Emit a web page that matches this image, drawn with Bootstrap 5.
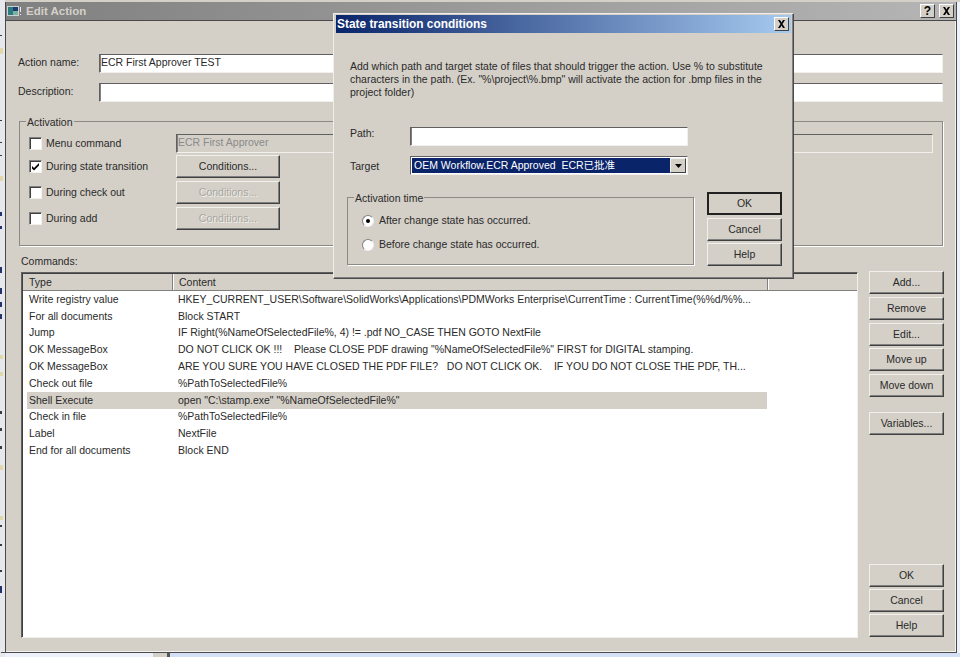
<!DOCTYPE html>
<html lang="en"><head><meta charset="utf-8"><title>Edit Action</title>
<link href="https://cdn.jsdelivr.net/npm/bootstrap@5.3.0/dist/css/bootstrap.min.css" rel="stylesheet">
<style>
html,body{height:100%;}
body{margin:0;background:#edf1fb;font-family:"Liberation Sans",Arial,"Noto Sans CJK SC",sans-serif;font-size:10.5px;line-height:13px;color:#2a2a2a;overflow:hidden;}
.desk{position:relative;width:960px;height:657px;overflow:hidden;}
.topstrip{height:2px;background:#d4d0c8;}
.edge-marks{position:absolute;left:0;top:0;}
.foot-strip{position:absolute;left:153px;top:653px;width:14px;height:4px;background:#d4d0c8;border-right:3px solid #555;box-sizing:content-box;}
.foot-blue{position:absolute;left:170px;top:653px;right:0;height:4px;background:#d3e0f5;}
.win{position:absolute;background:#d4d0c8;border:1px solid #4a4a4a;}
.win-main{left:5px;top:2px;width:952px;height:651px;border-top:0;box-shadow:inset -1px -1px 0 #f4f2ee;}
.win-front{left:333px;top:13px;width:461px;height:266px;border-top-color:#f0eeea;border-left-color:#f0eeea;box-shadow:inset -1px -1px 0 #808080;}
.tbar{display:flex;align-items:center;justify-content:space-between;font-weight:700;font-size:11.5px;}
.tbar-grey{height:19px;padding:0 2px 0 1px;background:linear-gradient(90deg,#808080,#b5b5b5);color:#d4d0c8;border-bottom:1px solid #4a4a4a;}
.tbar-blue{height:18px;margin:1px 2px 0;padding:0 2px 0 1px;background:linear-gradient(90deg,#0a246a,#a6caf0);color:#fff;font-size:11.9px;}
.tbtn{display:flex;align-items:center;justify-content:center;width:15px;height:14px;background:#d4d0c8;border:1px solid;border-color:#fff #404040 #404040 #fff;color:#000;font-size:12px;line-height:12px;font-weight:700;padding:0;}
.wbtn{display:block;padding:0;background:#d4d0c8;color:#2a2a2a;font-size:10.5px;line-height:13px;text-align:center;border:1px solid;border-color:#f2f0ec #404040 #404040 #f2f0ec;box-shadow:inset -1px -1px 0 #808080;border-radius:0;}
.wbtn[disabled]{color:#a8a69f;text-shadow:1px 1px 0 #f2f0ec;opacity:1;}
.wbtn-def{border:2px solid #222;box-shadow:none;}
.field{background:#fff;border:1px solid;border-color:#606060 #f2f0ec #f2f0ec #606060;box-shadow:inset 1px 0 0 #808080;padding:0 1px;font-size:10.5px;line-height:15px;color:#2a2a2a;height:19px;}
.field-off{background:#d4d0c8;color:#8a8a8a;}
.group{position:relative;border:1px solid #8c8a85;box-shadow:1px 1px 0 #fff;}
.legend{position:absolute;top:-6px;left:6px;background:#d4d0c8;padding:0 1px;}
.chk{width:13px;height:13px;background:#fff;border:1px solid;border-color:#808080 #f2f0ec #f2f0ec #808080;box-shadow:inset 1px 1px 0 #404040;flex:none;display:flex;}
.rad{width:12px;height:12px;border-radius:50%;background:#fff;border:1px solid;border-color:#808080 #f2f0ec #f2f0ec #808080;flex:none;display:flex;align-items:center;justify-content:center;}
.rad i{display:block;width:4px;height:4px;border-radius:50%;background:#000;}
/* main window */
.main-body{padding:33px 13px 0 12px;}
.frm-row{display:flex;align-items:center;height:19px;margin-bottom:10px;}
.frm-lbl{width:81px;flex:none;margin-bottom:2px;}
.act-group{height:125px;margin:19px 0 0 1px;padding:10px 9px 0 9px;}
.act-row{display:flex;align-items:center;gap:4px;height:22px;margin-bottom:4px;}
.act-row.act-first{margin-bottom:1px;}
.act-row .lbl{width:126px;flex:none;}
.act-row .wbtn{width:104px;height:23px;}
.cmd-title{margin:9px 0 4px 3px;}
.lst{width:837px;height:366px;margin-left:3px;flex:none;background:#fff;border:1px solid;border-color:#606060 #f2f0ec #f2f0ec #606060;box-shadow:inset 1px 1px 0 #404040;padding:1px 0 0 1px;}
.lst-head{display:flex;height:17px;background:#d4d0c8;border-bottom:1px solid #808080;}
.lst-head div{padding:2px 0 0 6px;border-right:1px solid #808080;box-shadow:1px 0 0 #fff;}
.cola{width:150px;flex:none;}.colb{width:595px;flex:none;}.colc{flex:1;border-right:0!important;box-shadow:none!important;}
.lst-rows{padding:0 0 0 4px;}
.lst-row{display:flex;height:16.8px;align-items:center;width:740px;}
.lst-row .ta{width:151px;flex:none;padding-left:2px;}
.lst-row .tb{white-space:nowrap;overflow:hidden;}
.lst-row.sel{background:#d4d0c8;}
.side{width:75px;margin:-1px 0 0 11px;display:flex;flex-direction:column;height:368px;flex:none;}
.side .wbtn{height:23px;width:75px;margin-bottom:2.75px;flex:none;}
.side .wbtn.gap-var{margin-top:12px;}
.side .wbtn.tail{margin-bottom:2px;}
/* front */
.front-body{padding:27px 0 0 16px;position:relative;}
.front-txt{width:424px;margin:0;}
.front-row{display:flex;align-items:center;height:19px;}
.front-row .lbl{width:60px;flex:none;}
.front-row .lbl-up{margin-bottom:6px;}
.front-row .lbl-down{margin-top:1px;}
.front-row .field{width:278px;}
.combo{width:278px;height:19px;background:#fff;border:1px solid #f2f0ec;border-top-color:#606060;border-left-color:#606060;padding:1px;display:flex;}
.combo-val{flex:1;background:#0a246a;color:#fff;padding:0 2px;line-height:15px;font-size:10.5px;}
.combo-btn{width:16px;background:#d4d0c8;border:1px solid;border-color:#f2f0ec #404040 #404040 #f2f0ec;display:flex;align-items:center;justify-content:center;}
.path-row{margin-top:28px;}
.target-row{margin-top:10px;}
.time-row{display:flex;margin-top:17px;}
.time-group{width:347px;height:68px;margin:5px 0 0 -3px;padding:16px 0 0 14px;}
.time-opt{display:flex;align-items:center;gap:5px;height:13px;margin-bottom:11px;}
.front-btns{margin-left:13px;width:75px;}
.front-btns .wbtn{width:75px;height:23px;margin-bottom:3px;}
.front-btns .wbtn:nth-child(2){margin-bottom:2px;}
</style></head>
<body>
<div class="desk">
<div class="topstrip"></div>
<svg class="edge-marks" width="5" height="657" viewBox="0 0 5 657">
  <rect width="5" height="657" fill="#e6e8ee"/>
  <g fill="#3a3a3a"><rect y="35" width="2" height="1"/><rect y="120" width="2" height="1"/><rect y="142" width="2" height="1"/><rect y="155" width="2" height="1"/><rect y="373" width="2" height="2"/><rect y="411" width="2" height="3"/><rect y="428" width="2" height="3"/><rect y="446" width="2" height="3"/><rect y="525" width="2" height="2"/><rect y="544" width="2" height="2"/><rect y="570" width="2" height="2"/></g>
  <g fill="#22336e"><rect y="212" width="2" height="4"/><rect y="226" width="2" height="3"/><rect y="267" width="2" height="6"/><rect y="288" width="2" height="6"/><rect y="302" width="2" height="5"/><rect y="314" width="2" height="5"/><rect y="586" width="2" height="7"/></g>
  <g fill="#e2d7a6"><rect y="48" width="3" height="6"/><rect y="176" width="3" height="5"/><rect y="355" width="3" height="4"/><rect y="372" width="3" height="4"/><rect y="465" width="3" height="5"/><rect y="516" width="3" height="4"/></g>
  <rect x="1" y="652" width="4" height="1" fill="#4a4a4a"/>
</svg>
<div class="foot-strip"></div><div class="foot-blue"></div>

<section class="win win-main">
  <div class="tbar tbar-grey"><span class="d-flex align-items-center gap-1">
    <svg width="15" height="10" viewBox="0 0 15 10"><rect width="12" height="10" fill="#c8d2d2"/><rect x="1" y="1" width="5" height="8" fill="#2a7c80"/><rect x="6" y="1" width="5" height="4" fill="#1a3c70"/><rect x="6" y="5" width="5" height="4" fill="#7fb0a8"/><rect x="13" y="1" width="1" height="5" fill="#e8e8e8"/><rect x="13" y="8" width="1" height="1" fill="#e8e8e8"/></svg>
    Edit Action</span>
    <span class="d-flex gap-1"><button class="tbtn">?</button><button class="tbtn"><svg width="9" height="8" viewBox="0 0 9 8"><path d="M1 0h2l1.500 2.500L6 0h2L5.500 4 8 8H6L4.500 5.500 3 8H1l2.500-4z" fill="#000"/></svg></button></span>
  </div>
  <div class="main-body">
    <div class="frm-row"><div class="frm-lbl">Action name:</div><div class="field flex-grow-1">ECR First Approver TEST</div></div>
    <div class="frm-row"><div class="frm-lbl">Description:</div><div class="field flex-grow-1"></div></div>
    <div class="group act-group">
      <div class="legend">Activation</div>
      <div class="act-row act-first"><span class="chk"></span><span class="lbl">Menu command</span><div class="field field-off flex-grow-1">ECR First Approver</div></div>
      <div class="act-row"><span class="chk"><svg width="11" height="11" viewBox="0 0 11 11"><path d="M2 5l2 2 5-5v2.500L4 9.500 2 7.500z" fill="#000"/></svg></span><span class="lbl">During state transition</span><button class="wbtn">Conditions...</button></div>
      <div class="act-row"><span class="chk"></span><span class="lbl">During check out</span><button class="wbtn" disabled>Conditions...</button></div>
      <div class="act-row"><span class="chk"></span><span class="lbl">During add</span><button class="wbtn" disabled>Conditions...</button></div>
    </div>
    <div class="cmd-title">Commands:</div>
    <div class="d-flex">
      <div class="lst">
        <div class="lst-head"><div class="cola">Type</div><div class="colb">Content</div><div class="colc"></div></div>
        <div class="lst-rows">
          <div class="lst-row"><div class="ta">Write registry value</div><div class="tb">HKEY_CURRENT_USER\Software\SolidWorks\Applications\PDMWorks Enterprise\CurrentTime : CurrentTime(%%d/%%...</div></div>
          <div class="lst-row"><div class="ta">For all documents</div><div class="tb">Block START</div></div>
          <div class="lst-row"><div class="ta">Jump</div><div class="tb">IF Right(%NameOfSelectedFile%, 4) != .pdf NO_CASE THEN GOTO NextFile</div></div>
          <div class="lst-row"><div class="ta">OK MessageBox</div><div class="tb">DO NOT CLICK OK !!! &nbsp;&nbsp; Please CLOSE PDF drawing "%NameOfSelectedFile%" FIRST for DIGITAL stamping.</div></div>
          <div class="lst-row"><div class="ta">OK MessageBox</div><div class="tb">ARE YOU SURE YOU HAVE CLOSED THE PDF FILE? &nbsp;&nbsp;DO NOT CLICK OK. &nbsp;&nbsp; IF YOU DO NOT CLOSE THE PDF, TH...</div></div>
          <div class="lst-row"><div class="ta">Check out file</div><div class="tb">%PathToSelectedFile%</div></div>
          <div class="lst-row sel"><div class="ta">Shell Execute</div><div class="tb">open "C:\stamp.exe" "%NameOfSelectedFile%"</div></div>
          <div class="lst-row"><div class="ta">Check in file</div><div class="tb">%PathToSelectedFile%</div></div>
          <div class="lst-row"><div class="ta">Label</div><div class="tb">NextFile</div></div>
          <div class="lst-row"><div class="ta">End for all documents</div><div class="tb">Block END</div></div>
        </div>
      </div>
      <div class="side">
        <button class="wbtn">Add...</button>
        <button class="wbtn">Remove</button>
        <button class="wbtn">Edit...</button>
        <button class="wbtn">Move up</button>
        <button class="wbtn">Move down</button>
        <button class="wbtn gap-var">Variables...</button>
        <button class="wbtn tail mt-auto">OK</button>
        <button class="wbtn tail">Cancel</button>
        <button class="wbtn tail">Help</button>
      </div>
    </div>
  </div>
</section>

<section class="win win-front">
  <div class="tbar tbar-blue">State transition conditions<button class="tbtn"><svg width="9" height="8" viewBox="0 0 9 8"><path d="M1 0h2l1.500 2.500L6 0h2L5.500 4 8 8H6L4.500 5.500 3 8H1l2.500-4z" fill="#000"/></svg></button></div>
  <div class="front-body">
    <p class="front-txt">Add which path and target state of files that should trigger the action. Use % to substitute characters in the path. (Ex. "%\project\%.bmp" will activate the action for .bmp files in the project folder)</p>
    <div class="front-row path-row"><div class="lbl lbl-up">Path:</div><div class="field"></div></div>
    <div class="front-row target-row"><div class="lbl lbl-down">Target</div><div class="combo"><div class="combo-val">OEM Workflow.ECR Approved&nbsp; ECR已批准</div><div class="combo-btn"><svg width="7" height="4" viewBox="0 0 7 4"><path d="M0 0h7L3.500 4z" fill="#000"/></svg></div></div></div>
    <div class="time-row">
      <div class="group time-group"><div class="legend">Activation time</div>
        <div class="time-opt"><span class="rad"><i></i></span>After change state has occurred.</div>
        <div class="time-opt"><span class="rad"></span>Before change state has occurred.</div>
      </div>
      <div class="front-btns"><button class="wbtn wbtn-def">OK</button><button class="wbtn">Cancel</button><button class="wbtn">Help</button></div>
    </div>
  </div>
</section>
</div>
</body></html>
